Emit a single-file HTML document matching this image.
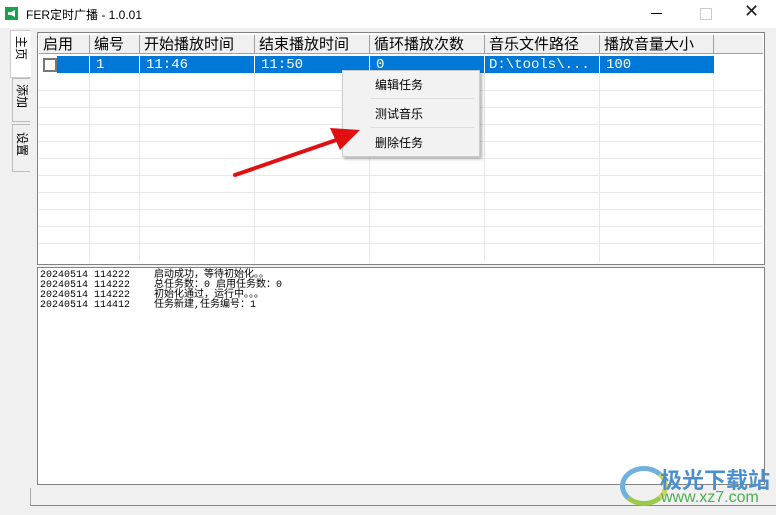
<!DOCTYPE html><html><head><meta charset="utf-8"><style>
body{margin:0;width:776px;height:515px;background:#f0f0f0;font-family:"Liberation Sans","Noto Sans CJK SC",sans-serif;position:relative;overflow:hidden}
.a{position:absolute}
.title{left:0;top:0;width:776px;height:28px;background:#fff}
.mono{font-family:"Liberation Mono","Noto Sans CJK SC",monospace}
.hd{top:35px;height:19px;background:#f0f0f0;border-right:1px solid #a0a0a0;border-bottom:1px solid #a0a0a0;font-size:15px;line-height:19px;padding-left:4px;box-sizing:border-box;color:#000}
.vl{top:55px;width:1px;height:207px;background:#e8e8e8}
.hl{left:39px;width:723px;height:1px;background:#e8e8e8}
.cell{top:56px;height:18px;color:#fff;font-size:14px;line-height:18px}
.log{font-family:"Liberation Mono","Noto Sans CJK SC",monospace;font-size:10px;line-height:10px;height:10px;white-space:pre;color:#000;left:40px}
.mi{left:375px;font-size:12px;color:#000}
.tab{font-size:12px;writing-mode:vertical-rl;text-orientation:sideways}
</style></head><body>
<div class="a title"></div>
<div class="a" style="left:5px;top:7px;width:13px;height:13px;background:#1aa14b"></div>
<div class="a" style="left:8px;top:10px;width:7px;height:7px;background:#fff;clip-path:polygon(0 30%,40% 30%,100% 0,100% 100%,40% 70%,0 70%)"></div>
<div class="a" style="left:26px;top:6px;font-size:12px">FER定时广播 - 1.0.01</div>
<div class="a" style="left:651px;top:13px;width:11px;height:1px;background:#000"></div>
<div class="a" style="left:700px;top:8px;width:10px;height:10px;border:1px solid #ccc"></div>
<div class="a" style="left:744px;top:1px;font-size:18px;color:#222">✕</div>
<!-- tabs -->
<div class="a" style="left:10px;top:30px;width:20px;height:46px;background:#fff;border:1px solid #ccc;border-right:none"></div>
<div class="a tab" style="left:13px;top:36px">主页</div>
<div class="a" style="left:12px;top:78px;width:17px;height:42px;border:1px solid #bbb;border-right:none"></div>
<div class="a tab" style="left:14px;top:84px">添加</div>
<div class="a" style="left:12px;top:124px;width:17px;height:46px;border:1px solid #bbb;border-right:none"></div>
<div class="a tab" style="left:14px;top:132px">设置</div>
<!-- list -->
<div class="a" style="left:37px;top:32px;width:726px;height:231px;background:#fff;border:1px solid #828282"></div>
<div class="a hd" style="left:39px;width:51px">启用</div>
<div class="a hd" style="left:90px;width:50px">编号</div>
<div class="a hd" style="left:140px;width:115px">开始播放时间</div>
<div class="a hd" style="left:255px;width:115px">结束播放时间</div>
<div class="a hd" style="left:370px;width:115px">循环播放次数</div>
<div class="a hd" style="left:485px;width:115px">音乐文件路径</div>
<div class="a hd" style="left:600px;width:114px">播放音量大小</div>
<div class="a hd" style="left:714px;width:49px;border-right:none"></div>
<div class="a vl" style="left:89px"></div><div class="a vl" style="left:139px"></div><div class="a vl" style="left:254px"></div><div class="a vl" style="left:369px"></div><div class="a vl" style="left:484px"></div><div class="a vl" style="left:599px"></div><div class="a vl" style="left:713px"></div>
<div class="a hl" style="top:90px"></div><div class="a hl" style="top:107px"></div><div class="a hl" style="top:124px"></div><div class="a hl" style="top:141px"></div><div class="a hl" style="top:158px"></div><div class="a hl" style="top:175px"></div><div class="a hl" style="top:192px"></div><div class="a hl" style="top:209px"></div><div class="a hl" style="top:226px"></div><div class="a hl" style="top:243px"></div>
<div class="a" style="left:57px;top:56px;width:657px;height:17px;background:#0078d7"></div>
<div class="a" style="left:43px;top:58px;width:10px;height:10px;border:2px solid #777;background:#fff"></div>
<div class="a" style="left:89px;top:56px;width:1px;height:17px;background:#fff"></div><div class="a" style="left:139px;top:56px;width:1px;height:17px;background:#fff"></div><div class="a" style="left:254px;top:56px;width:1px;height:17px;background:#fff"></div><div class="a" style="left:369px;top:56px;width:1px;height:17px;background:#fff"></div><div class="a" style="left:484px;top:56px;width:1px;height:17px;background:#fff"></div><div class="a" style="left:599px;top:56px;width:1px;height:17px;background:#fff"></div>
<div class="a cell mono" style="left:96px">1</div>
<div class="a cell mono" style="left:146px">11:46</div>
<div class="a cell mono" style="left:261px">11:50</div>
<div class="a cell mono" style="left:376px">0</div>
<div class="a cell mono" style="left:489px">D:\tools\...</div>
<div class="a cell mono" style="left:606px">100</div>
<!-- context menu -->
<div class="a" style="left:342px;top:70px;width:136px;height:85px;background:#f2f2f2;border:1px solid #ccc;box-shadow:2px 2px 3px rgba(0,0,0,.3)"></div>
<div class="a mi" style="top:76px">编辑任务</div>
<div class="a" style="left:371px;top:98px;width:103px;height:1px;background:#ddd"></div>
<div class="a mi" style="top:105px">测试音乐</div>
<div class="a" style="left:371px;top:127px;width:103px;height:1px;background:#ddd"></div>
<div class="a mi" style="top:134px">删除任务</div>
<!-- arrow -->
<svg class="a" style="left:230px;top:120px" width="140" height="60"><line x1="5" y1="55" x2="115" y2="17" stroke="#e01010" stroke-width="4" stroke-linecap="round"/><polygon points="130,10 100,8 110,30" fill="#e01010"/></svg>
<!-- log -->
<div class="a" style="left:37px;top:267px;width:726px;height:216px;background:#fff;border:1px solid #828282"></div>
<div class="a log" style="top:271px">20240514 114222    启动成功，等待初始化。。</div>
<div class="a log" style="top:281px">20240514 114222    总任务数：0 启用任务数：0</div>
<div class="a log" style="top:291px">20240514 114222    初始化通过，运行中。。。</div>
<div class="a log" style="top:301px">20240514 114412    任务新建,任务编号：1</div>
<div class="a" style="left:30px;top:505px;width:746px;height:1px;background:#888"></div>
<div class="a" style="left:30px;top:488px;width:1px;height:18px;background:#aaa"></div>
<!-- watermark -->
<div class="a" style="left:620px;top:466px;width:38px;height:30px;border-radius:50%;border:5px solid #6fb0dc;border-right-color:#c9d85a;border-bottom-color:#9cc94a"></div>
<div class="a" style="left:660px;top:463px;font-size:22px;font-weight:bold;color:#4a90d0">极光下载站</div>
<div class="a" style="left:661px;top:489px;font-size:16px;color:#4caf50">www.xz7.com</div>
</body></html>
